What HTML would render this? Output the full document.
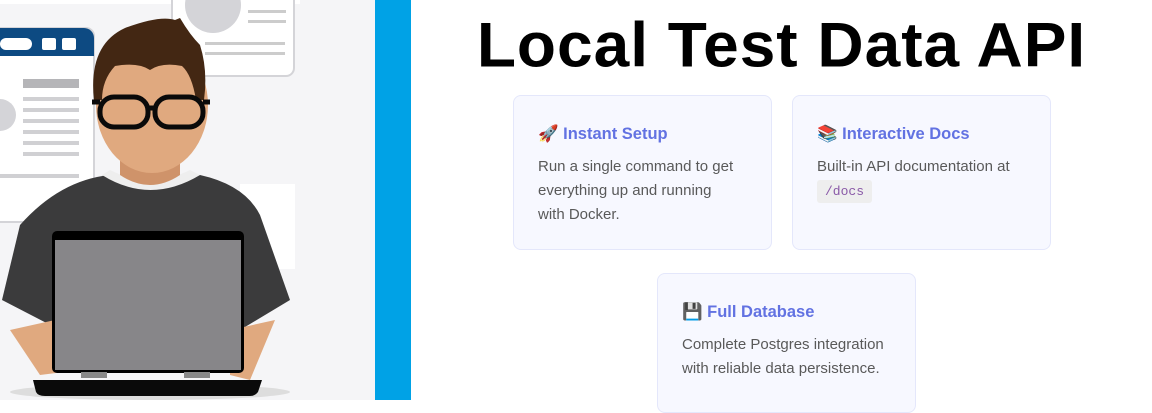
<!DOCTYPE html>
<html><head><meta charset="utf-8"><style>
body{margin:0;width:1152px;height:400px;overflow:hidden;background:#fff;position:relative;font-family:"Liberation Sans",sans-serif}
.blue{position:absolute;left:375px;top:0;width:36px;height:400px;background:#00a2e6}
h1{position:absolute;left:411px;width:741px;top:8px;margin:0;text-align:center;font-size:64px;font-weight:bold;color:#000;letter-spacing:1px;transform:scaleY(0.98)}
.card{position:absolute;width:259px;height:155px;background:#f7f8ff;border:1px solid #e4e7fb;border-radius:8px;box-sizing:border-box;padding:25px 32px 0 24px}
.card h3{margin:0 0 8px 0;font-size:16.5px;color:#6272e2;font-weight:bold;line-height:26px}
.card p{margin:0;font-size:15px;line-height:24px;color:#595959}
code{font-family:"Liberation Mono",monospace;font-size:13px;background:#eeeeee;color:#8a5aa8;padding:4px 8px;border-radius:3px}
</style></head><body>
<svg width="375" height="400" style="position:absolute;left:0;top:0">
<rect width="375" height="400" fill="#f5f5f7"/>
<rect x="0" y="0" width="300" height="4" fill="#fff"/>
<rect x="172" y="-10" width="122" height="86" rx="8" fill="#fff" stroke="#d4d4d8" stroke-width="2"/>
<circle cx="213" cy="5" r="28" fill="#d4d4d8"/>
<rect x="248" y="10" width="38" height="3" fill="#ccc"/><rect x="248" y="20" width="38" height="3" fill="#ccc"/><rect x="205" y="42" width="80" height="3" fill="#ccc"/><rect x="205" y="52" width="80" height="3" fill="#ccc"/>
<rect x="-10" y="28" width="104" height="194" rx="8" fill="#fff" stroke="#d4d4d8" stroke-width="2"/>
<path d="M-10 28 H84 a10 10 0 0 1 10 10 V56 H-10Z" fill="#0d4a82"/>
<rect x="0" y="38" width="32" height="12" rx="6" fill="#fff"/><rect x="42" y="38" width="14" height="12" rx="2" fill="#fff"/><rect x="62" y="38" width="14" height="12" rx="2" fill="#fff"/>
<circle cx="0" cy="115" r="16" fill="#d4d4d8"/>
<rect x="23" y="79" width="56" height="9" fill="#b5b5b8"/>
<g fill="#d0d0d3"><rect x="23" y="97" width="56" height="4"/><rect x="23" y="108" width="56" height="4"/><rect x="23" y="119" width="56" height="4"/><rect x="23" y="130" width="56" height="4"/><rect x="23" y="141" width="56" height="4"/><rect x="23" y="152" width="56" height="4"/><rect x="0" y="174" width="79" height="4"/></g>
<rect x="240" y="184" width="55" height="85" fill="#fff"/>
<ellipse cx="150" cy="392" rx="140" ry="8" fill="#ddd"/>
<path d="M20 225 Q60 180 110 175 L200 175 Q245 185 260 215 L290 300 L240 330 L60 330 L2 300Z" fill="#3b3b3c"/>
<path d="M102 175 Q150 205 200 175 L190 170 Q150 190 110 170Z" fill="#eee"/>
<path d="M120 140 L120 175 Q150 195 180 175 L180 140Z" fill="#cf936a"/>
<ellipse cx="152" cy="105" rx="56" ry="68" fill="#e0a97f"/>
<path d="M94 100 Q88 45 125 28 Q160 15 175 20 L180 18 Q190 35 200 45 Q208 70 204 100 L196 100 Q192 75 182 66 Q162 62 150 70 Q138 62 115 66 Q102 80 102 100Z" fill="#432713"/>
<g fill="none" stroke="#0a0a0a" stroke-width="5"><rect x="100" y="97" width="48" height="30" rx="14"/><rect x="155" y="97" width="48" height="30" rx="14"/><path d="M148 108 H155 M92 102 H100 M203 102 H210"/></g>
<path d="M10 330 L55 320 L80 370 L40 375Z" fill="#e0a97f"/>
<path d="M230 330 L275 320 L250 380 L230 375Z" fill="#e0a97f"/>
<rect x="52" y="231" width="192" height="142" rx="5" fill="#000"/>
<rect x="55" y="240" width="186" height="130" fill="#878689"/>
<rect x="81" y="372" width="26" height="6" fill="#888"/><rect x="184" y="372" width="26" height="6" fill="#888"/>
<path d="M33 380 H262 L258 392 Q255 396 250 396 H45 Q38 396 36 392Z" fill="#0a0a0a"/>
</svg>
<div class="blue"></div>
<h1>Local Test Data API</h1>
<div class="card" style="left:513px;top:95px"><h3>🚀 Instant Setup</h3><p>Run a single command to get everything up and running with Docker.</p></div>
<div class="card" style="left:792px;top:95px"><h3>📚 Interactive Docs</h3><p>Built-in API documentation at <code>/docs</code></p></div>
<div class="card" style="left:657px;top:273px;height:140px;padding-right:16px"><h3>💾 Full Database</h3><p>Complete Postgres integration with reliable data persistence.</p></div>
</body></html>
